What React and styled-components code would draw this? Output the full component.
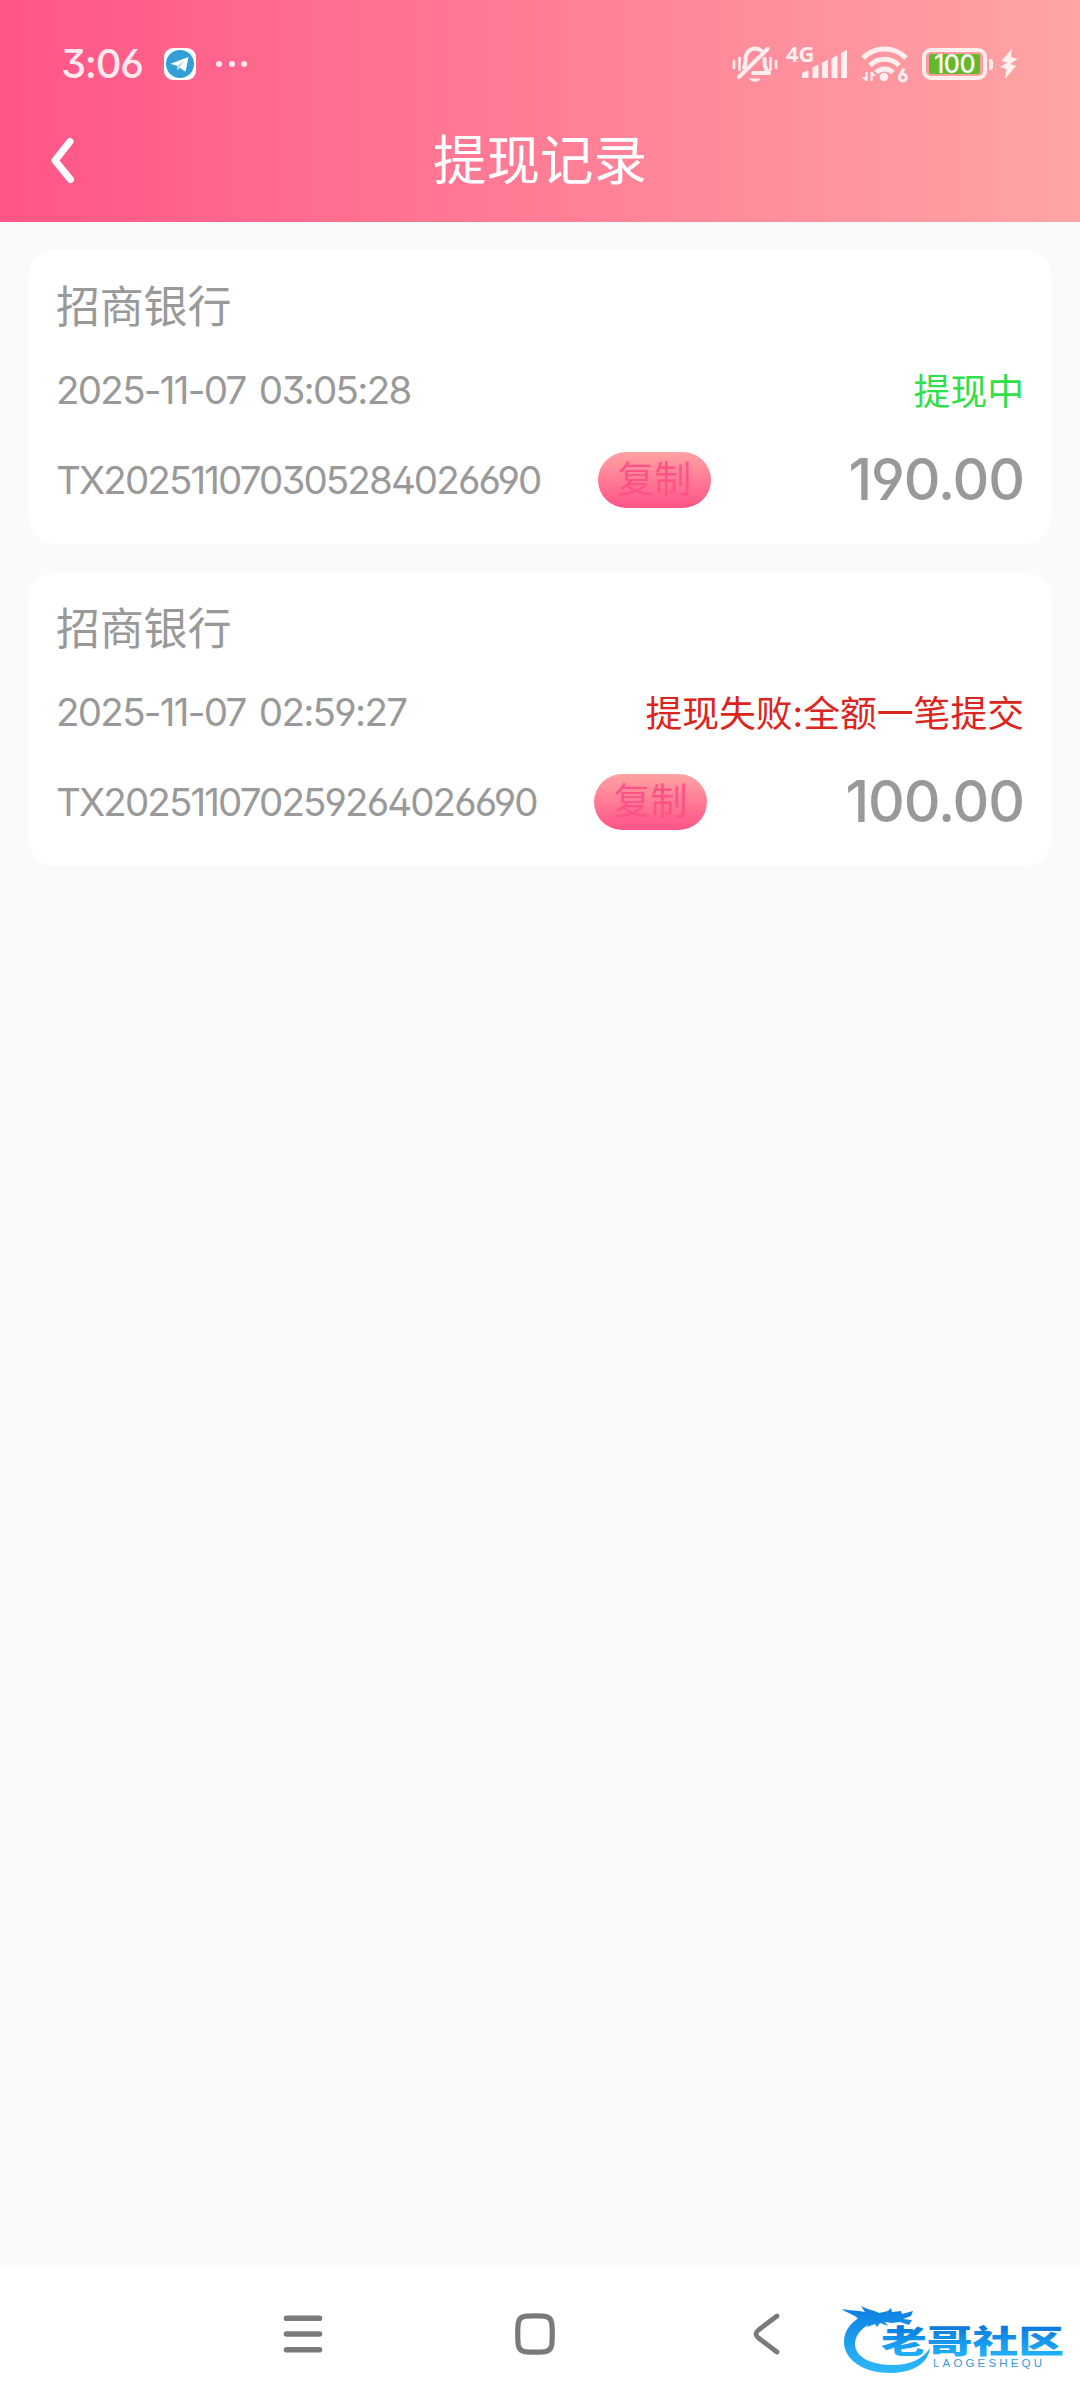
import React from 'react';
import styled, { createGlobalStyle } from 'styled-components';

const records = [
  {
    id: 'TX202511070305284026690',
    bank: '招商银行',
    time: '2025-11-07 03:05:28',
    status: '提现中',
    statusColor: '#2fe04a',
    amount: '190.00',
  },
  {
    id: 'TX202511070259264026690',
    bank: '招商银行',
    time: '2025-11-07 02:59:27',
    status: '提现失败:全额一笔提交',
    statusColor: '#dc2420',
    amount: '100.00',
  },
];

const BellOffIcon = () => (
  <svg width="46" height="42" viewBox="0 0 46 42" fill="none" stroke="#ffeef0" strokeWidth="4" strokeLinecap="round">
    <path d="M12 24.500c1.500-2 1.500-4 1.500-8C13.500 9.500 18 5.500 23 5.500c2.500 0 4.500.8 6 2" />
    <path d="M32.500 16c0 6 0 9 4.500 14H21" strokeLinejoin="round" />
    <path d="M35.500 6L7 34" />
    <path d="M18 36h10c-1 3-9 3-10 0z" fill="#ffeef0" strokeWidth="1" />
    <path d="M2 18v7M7.500 15v12M38.500 15v12M44 18v7" strokeWidth="2.600" />
  </svg>
);

const SignalIcon = () => (
  <svg width="46" height="30" viewBox="0 0 46 30" fill="#ffeef0">
    <path d="M0 29v-4q0-1 1-1.400l4.500-2q1-.4 1 .8V29z" />
    <path d="M10.500 29V18.500l5-2.500q1-.4 1 .8V29z" />
    <path d="M20 29V14l5-3q1-.4 1 .8V29z" />
    <path d="M29.500 29V9.500l5-3q1-.4 1 .8V29z" />
    <path d="M39 29V4.500L44 1q1-.5 1 .8V29z" />
  </svg>
);

const WifiIcon = () => (
  <svg width="48" height="38" viewBox="0 0 48 38" fill="none" stroke="#ffeef0" strokeWidth="5">
    <path d="M2 13a30 30 0 0 1 43 0" />
    <path d="M9 20.500a20 20 0 0 1 29 0" />
    <path d="M15 27.500a12 12 0 0 1 17 0" />
    <circle cx="23" cy="32" r="4.300" fill="#ffeef0" stroke="none" />
    <path d="M5.500 36v-9M10.500 27v9" strokeWidth="2.200" />
    <path d="M.5 32h5v4.500zM15 31h-4.500v-4.500z" fill="#ffeef0" stroke="none" />
    <path d="M43 23.500l-4 7" strokeWidth="3" />
    <circle cx="41.800" cy="32.500" r="3.500" strokeWidth="3" />
  </svg>
);

const BoltIcon = () => (
  <svg width="19" height="32" viewBox="0 0 19 32" fill="#fff1f0">
    <path d="M13 .5L2.500 13l6 1.500L1 19l6.500 2L6 31l11-13-6-2 7.500-5L12 9z" />
  </svg>
);

const TelegramIcon = () => (
  <svg width="32" height="32" viewBox="0 0 32 32">
    <rect width="32" height="32" rx="9" fill="#fff" />
    <circle cx="16" cy="16" r="14" fill="#349fd6" />
    <path d="M6.500 15.800L24.500 9 21.500 23.800l-5.500-4-2.500 2.200v-4z" fill="#fff" />
    <path d="M13.500 18l7-5.500-5 6.500-2 3z" fill="#a9d3ea" />
  </svg>
);

const WatermarkLogo = () => (
  <svg width="226" height="78" viewBox="0 0 226 78">
    <defs>
      <linearGradient id="ink" x1="0" y1="0" x2="0" y2="1">
        <stop offset="0.2" stopColor="#0a78dc" />
        <stop offset="0.9" stopColor="#22b4fb" />
      </linearGradient>
      <linearGradient id="tail" gradientUnits="userSpaceOnUse" x1="0" y1="4" x2="0" y2="70">
        <stop offset="0" stopColor="#0d7ee2" />
        <stop offset="1" stopColor="#2cb8fa" />
      </linearGradient>
    </defs>
    <g fill="url(#tail)">
      <path d="M27 11C10 17 2 28 2 40c0 18 20 31 46 31 22 0 38-9 40-25-7 11-20 17-37 17C29 63 13 55 13 42c0-9 7-17 19-22z" />
      <path d="M0 7c8 2 15 1 23 3l-4-6c7 4 13 4 18 7l9-2 3-3 1 4 9-1 1 3 11-3-2 5-8 3 9 1-3 5-9-3-8 1-7-1 3 4-8-3-3 4-2-3-8 3 2-5-7 1 3-4-6 1C13 12 6 12 0 7z" />
    </g>
    <text x="39" y="51" textLength="183" lengthAdjust="spacingAndGlyphs" fontFamily="'Noto Sans CJK SC', sans-serif" fontWeight="900" fontSize="31.500" fill="url(#ink)">老哥社区</text>
    <text x="91" y="65" textLength="109" fontFamily="'Liberation Sans', sans-serif" fontWeight="400" fontSize="11.500" fill="#3a97df">LAOGESHEQU</text>
  </svg>
);

const App = () => {
  return (
    <>
      <GlobalStyle />
      <Screen>
        <Header>
          <StatusBar>
            <Clock>3:06</Clock>
            <TelegramIcon />
            <MoreDots>
              <i />
              <i />
              <i />
            </MoreDots>
            <StatusIcons>
              <BellOffIcon />
              <Network>4G</Network>
              <SignalIcon />
              <WifiIcon />
              <Battery>
                <BatteryLevel>100</BatteryLevel>
              </Battery>
              <BatteryTip />
              <BoltIcon />
            </StatusIcons>
          </StatusBar>
          <TitleBar>
            <BackButton aria-label="返回">
              <svg width="24" height="48" viewBox="0 0 24 48" fill="none" stroke="#fff" strokeWidth="7" strokeLinecap="round" strokeLinejoin="round">
                <path d="M20 4.500L5 23.500l15.500 19" />
              </svg>
            </BackButton>
            <Title>提现记录</Title>
          </TitleBar>
        </Header>

        <RecordList>
          {records.map((item) => (
            <RecordCard key={item.id}>
              <BankName>{item.bank}</BankName>
              <Row $height={88}>
                <Time>{item.time}</Time>
                <Status $color={item.statusColor}>{item.status}</Status>
              </Row>
              <Row $height={91}>
                <OrderNo>{item.id}</OrderNo>
                <CopyButton>复制</CopyButton>
                <Amount>{item.amount}</Amount>
              </Row>
            </RecordCard>
          ))}
        </RecordList>

        <NavBar>
          <NavButton aria-label="菜单">
            <svg width="40" height="42" viewBox="0 0 40 42" stroke="#7a7a7a" strokeWidth="5.600" strokeLinecap="round">
              <path d="M3.500 5.300h33M3.500 21h33M3.500 36.700h33" />
            </svg>
          </NavButton>
          <NavButton aria-label="主页">
            <svg width="42" height="42" viewBox="0 0 42 42" fill="none" stroke="#7a7a7a" strokeWidth="5.200">
              <path d="M12 3.200Q21 2.500 30 3.200Q37 3.800 37.800 10.500Q38.800 21 37.800 31.500Q37 38.200 30 38.800Q21 39.500 12 38.800Q5 38.200 4.200 31.500Q3.200 21 4.200 10.500Q5 3.800 12 3.200z" />
            </svg>
          </NavButton>
          <NavButton aria-label="返回">
            <svg width="28" height="42" viewBox="0 0 28 42" fill="none" stroke="#7a7a7a" strokeWidth="4.800" strokeLinecap="round" strokeLinejoin="round">
              <path d="M24 3L5.500 17q-5 4 0 8L24 39" />
            </svg>
          </NavButton>
          <Watermark>
            <WatermarkLogo />
          </Watermark>
        </NavBar>
      </Screen>
    </>
  );
};

const GlobalStyle = createGlobalStyle`
  * {
    box-sizing: border-box;
  }

  body {
    margin: 0;
    background: #fafafa;
    font-family: Inter, 'Noto Sans CJK SC', sans-serif;
  }

  svg {
    display: block;
    flex-shrink: 0;
  }
`;

const Screen = styled.div`
  width: 1080px;
  height: 2400px;
  display: flex;
  flex-direction: column;
  background: #fafafa;
  overflow: hidden;
`;

const Header = styled.header`
  height: 222px;
  background: linear-gradient(90deg, #ff5586, #ffa5a5);
`;

const StatusBar = styled.div`
  height: 96px;
  padding: 32px 62px 0 61px;
  display: flex;
  align-items: center;
`;

const Clock = styled.span`
  width: 103px;
  font-size: 40px;
  font-weight: 500;
  line-height: 48px;
  letter-spacing: -1.3px;
  color: #ffe9ef;
  font-feature-settings: 'ss01', 'cv03', 'cv04';
`;

const MoreDots = styled.div`
  display: flex;
  gap: 6.5px;
  margin-left: 20px;

  i {
    width: 6px;
    height: 6px;
    border-radius: 50%;
    background: #ffe9ef;
  }
`;

const StatusIcons = styled.div`
  margin-left: auto;
  display: flex;
  align-items: center;
`;

const Network = styled.span`
  width: 28px;
  margin: -22px -12px 0 8px;
  font-family: 'Open Sans', sans-serif;
  font-size: 22px;
  font-weight: 700;
  line-height: 22px;
  color: #ffeef0;

  + svg {
    margin-right: 13px;
  }
`;

const Battery = styled.div`
  width: 65px;
  height: 32px;
  margin-left: 13px;
  padding: 2px 3px;
  border: 4px solid #ffeeec;
  border-radius: 9px;
`;

const BatteryLevel = styled.div`
  height: 100%;
  display: flex;
  align-items: center;
  justify-content: center;
  background: #62b92c;
  border-radius: 2px;
  color: #fff;
  font-size: 25px;
  font-weight: 500;
  letter-spacing: -0.5px;
`;

const BatteryTip = styled.div`
  width: 4px;
  height: 11px;
  margin: 0 6px 0 2px;
  border-radius: 0 3px 3px 0;
  background: #ffeeec;
`;

const TitleBar = styled.div`
  height: 130px;
  padding: 0 50px;
  display: grid;
  grid-template-columns: 100px 1fr 100px;
  align-items: center;
`;

const BackButton = styled.button`
  width: 24px;
  padding: 0;
  border: none;
  background: none;
`;

const Title = styled.h1`
  margin: 0;
  text-align: center;
  font-size: 53.5px;
  font-weight: 400;
  line-height: 64px;
  color: #fff;
`;

const RecordList = styled.main`
  flex: 1;
  display: flex;
  flex-direction: column;
  gap: 28px;
  padding: 28px;
`;

const RecordCard = styled.section`
  height: 294px;
  padding: 28px;
  border-radius: 28px;
  background: #fff;
`;

const BankName = styled.div`
  height: 68px;
  font-size: 44px;
  line-height: 58px;
  letter-spacing: -0.2px;
  color: #999;
`;

const Row = styled.div`
  height: ${(props) => props.$height}px;
  display: flex;
  align-items: center;
`;

const Detail = styled.span`
  font-size: 38.5px;
  font-weight: 400;
  font-feature-settings: 'ss01', 'cv03', 'cv04';
  color: #999;
  white-space: nowrap;
`;

const Time = styled(Detail)`
  letter-spacing: -1.7px;
  word-spacing: 4px;
`;

const OrderNo = styled(Detail)`
  letter-spacing: -1.88px;
`;

const Status = styled.span`
  margin-left: auto;
  padding-bottom: 3px;
  font-size: 36.8px;
  color: ${(props) => props.$color};
`;

const CopyButton = styled.button`
  width: 113px;
  height: 56px;
  margin-left: 57.5px;
  padding: 0;
  border: none;
  border-radius: 28px;
  background: linear-gradient(180deg, #ffa3a3, #ff5387);
  color: #ff5387;
  font-family: inherit;
  font-size: 37px;
  line-height: 54px;
`;

const Amount = styled.span`
  margin-left: auto;
  font-size: 57px;
  font-weight: 450;
  letter-spacing: -1.1px;
  font-feature-settings: 'ss01', 'cv03', 'cv04';
  color: #999;
`;

const NavBar = styled.nav`
  position: relative;
  height: 133px;
  padding: 0 197px 0 186px;
  display: flex;
  background: #fff;
`;

const NavButton = styled.button`
  width: 232px;
  padding: 0 0 0 1px;
  border: none;
  background: none;
  display: flex;
  align-items: center;
  justify-content: center;
`;

/* Floats over the right end of the bar */
const Watermark = styled.div`
  position: absolute;
  right: 12px;
  bottom: 20px;
`;

export default App;
